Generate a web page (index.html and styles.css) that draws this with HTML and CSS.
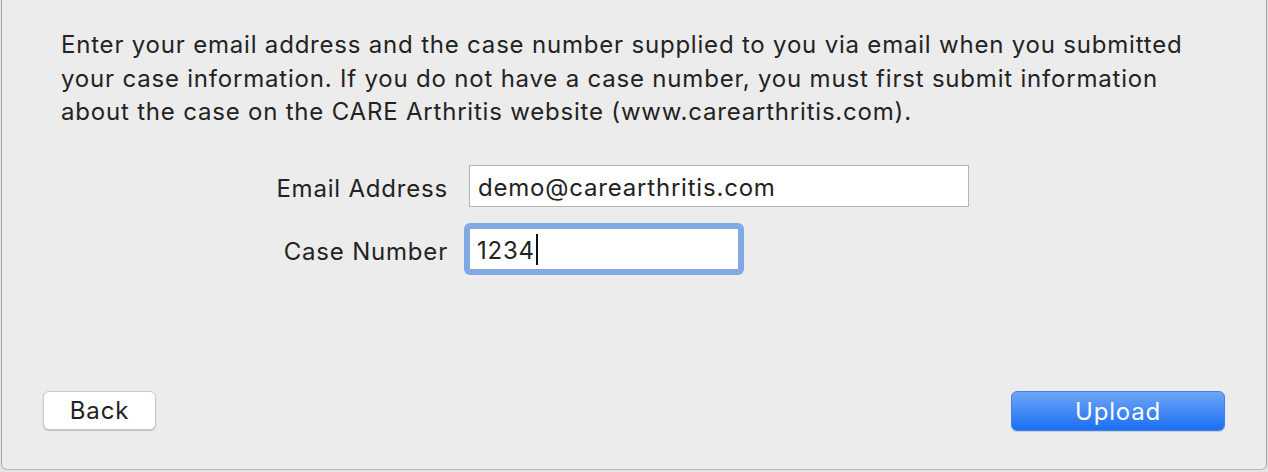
FILE: index.html
```html
<!DOCTYPE html>
<html>
<head>
<meta charset="utf-8">
<link rel="stylesheet" href="styles.css">
</head>
<body>
<div class="sheet">
  <p class="intro">Enter your email address and the case number supplied to you via email when you submitted your case information. If you do not have a case number, you must first submit information about the case on the CARE Arthritis website (www.carearthritis.com).</p>
  <div class="form">
    <div class="row">
      <label class="label">Email Address</label>
      <div class="field field-email">demo@carearthritis.com</div>
    </div>
    <div class="row">
      <label class="label">Case Number</label>
      <div class="focus"><div class="field field-case">1234<span class="caret"></span></div></div>
    </div>
  </div>
  <div class="actions">
    <button class="btn btn-back">Back</button>
    <button class="btn btn-upload">Upload</button>
  </div>
</div>
</body>
</html>
```
FILE: styles.css
```css
html, body {
  margin: 0;
  padding: 0;
  background: #e4e4e4;
  width: 1268px;
  height: 472px;
  overflow: hidden;
}
body {
  font-family: Inter, "Noto Sans", sans-serif;
  color: #232323;
  letter-spacing: 0.8px;
}
.sheet {
  box-sizing: border-box;
  margin-left: 1px;
  width: 1266px;
  height: 470px;
  background: #ececec;
  border-left: 1px solid #a8a8a8;
  border-right: 1px solid #a8a8a8;
  border-bottom: 1px solid #b8b8b8;
  border-radius: 0 0 6px 6px;
  display: flex;
  flex-direction: column;
  padding: 28px 0 0 59px;
}
.intro {
  margin: 0;
  width: 1140px;
  font-size: 24px;
  line-height: 33.5px;
}
.form {
  margin-top: 36px;
  display: flex;
  flex-direction: column;
  gap: 16px;
}
.row {
  display: flex;
  align-items: center;
}
.label {
  width: 408px;
  text-align: right;
  font-size: 24px;
  padding: 6px 21px 0 0;
  box-sizing: border-box;
}
.field {
  box-sizing: border-box;
  background: #fff;
  border: 1px solid #b5b5b5;
  height: 42px;
  font-size: 24px;
  padding: 4px 8px 0 8px;
  display: flex;
  align-items: center;
}
.field-email { width: 500px; }
.focus {
  margin-left: -5px;
  padding: 5px;
  background: #80a9e8;
  border-radius: 6px;
}
.field-case {
  width: 270px;
  height: 42px;
  border: 1px solid #8fa8cc;
  padding: 3px 8px 0 7px;
}
.caret {
  display: inline-block;
  width: 2px;
  height: 31px;
  background: #111;
  margin-left: 1px;
  margin-bottom: 2px;
}
.actions {
  margin-top: auto;
  margin-bottom: 38px;
  margin-left: -18px;
  margin-right: 41px;
  display: flex;
  justify-content: space-between;
  align-items: flex-start;
}
.btn {
  font-family: inherit;
  font-size: 24px;
  letter-spacing: 0.8px;
  border-radius: 6px;
  box-sizing: border-box;
  padding: 0;
}
.btn-back {
  width: 113px;
  height: 39px;
  background: #fff;
  color: #232323;
  border: 1px solid #c8c8c8;
  box-shadow: 0 1px 1px rgba(0,0,0,0.2);
}
.btn-upload {
  width: 214px;
  height: 40px;
  color: #fff;
  border: 1px solid #3f82ec;
  background: linear-gradient(#6ea6f8, #1a6ef2);
  box-shadow: 0 1px 1px rgba(0,0,0,0.15);
}
```
